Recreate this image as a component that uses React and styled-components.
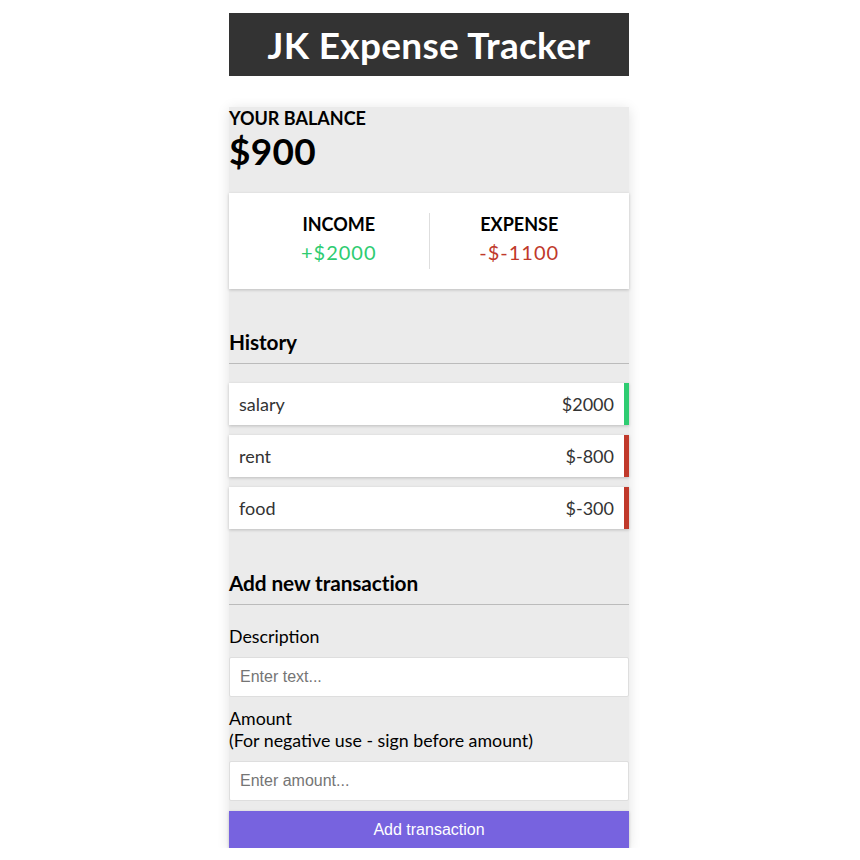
import React from 'react'
import styled, { createGlobalStyle } from 'styled-components'

const GlobalStyle = createGlobalStyle`
  * { box-sizing: border-box; }
  body {
    margin: 0;
    background: #fff;
    font-family: 'Lato', 'Open Sans', sans-serif;
    color: #000;
  }
`

const transactions = [
  { id: 1, text: 'salary', amount: 2000 },
  { id: 2, text: 'rent', amount: -800 },
  { id: 3, text: 'food', amount: -300 },
]

function App() {
  return (
    <>
      <GlobalStyle />
      <Page>
        <Header>JK Expense Tracker</Header>
        <Container>
          <BalanceTitle>Your Balance</BalanceTitle>
          <Balance>$900</Balance>

          <IncExp>
            <Half divider>
              <SmallTitle>Income</SmallTitle>
              <Money plus>+$2000</Money>
            </Half>
            <Half>
              <SmallTitle>Expense</SmallTitle>
              <Money>-$-1100</Money>
            </Half>
          </IncExp>

          <SectionTitle>History</SectionTitle>
          <List>
            {transactions.map(t => (
              <Item key={t.id} minus={t.amount < 0}>
                {t.text}
                <span>${t.amount}</span>
              </Item>
            ))}
          </List>

          <SectionTitle top={41}>Add new transaction</SectionTitle>
          <form onSubmit={e => e.preventDefault()}>
            <FormControl>
              <Label htmlFor="text">Description</Label>
              <Input type="text" id="text" placeholder="Enter text..." />
            </FormControl>
            <FormControl>
              <Label htmlFor="amount">
                Amount <br />
                (For negative use - sign before amount)
              </Label>
              <Input type="number" id="amount" placeholder="Enter amount..." />
            </FormControl>
            <Button>Add transaction</Button>
          </form>
        </Container>
      </Page>
    </>
  )
}

export default App

const Page = styled.div`
  display: flex;
  flex-direction: column;
  align-items: center;
  padding: 13px 2px 0 0;
`

const Header = styled.h2`
  width: 400px;
  height: 63px;
  margin: 0;
  background: #333;
  color: #fff;
  font-size: 37px;
  font-weight: 700;
  letter-spacing: 0.3px;
  display: flex;
  align-items: center;
  justify-content: center;
`

const Container = styled.div`
  width: 400px;
  margin-top: 31px;
  background: #ebebeb;
  box-shadow: 0 2px 12px rgba(0, 0, 0, 0.12);
`

const BalanceTitle = styled.h4`
  margin: 0;
  font-size: 18px;
  line-height: 22px;
  font-weight: 700;
  text-transform: uppercase;
`

const Balance = styled.h1`
  margin: 0;
  font-size: 37px;
  line-height: 43px;
  font-weight: 700;
  letter-spacing: 0.3px;
`

const IncExp = styled.div`
  background: #fff;
  box-shadow: 0 1px 3px rgba(0, 0, 0, 0.2);
  padding: 20px;
  margin-top: 21px;
  display: flex;
  justify-content: space-between;
`

const Half = styled.div`
  flex: 1;
  text-align: center;
  ${p => p.divider && 'border-right: 1px solid #dedede;'}
`

const SmallTitle = styled.h4`
  margin: 0;
  font-size: 18px;
  line-height: 22px;
  font-weight: 700;
  text-transform: uppercase;
`

const Money = styled.p`
  margin: 5px 0;
  font-size: 20px;
  line-height: 24px;
  letter-spacing: 1px;
  color: ${p => (p.plus ? '#2ecc71' : '#c0392b')};
`

const SectionTitle = styled.h3`
  margin: ${p => p.top || 40}px 0 0;
  padding-bottom: 8px;
  border-bottom: 1px solid #bbb;
  font-size: 20.8px;
  line-height: 26px;
  font-weight: 700;
  letter-spacing: -0.1px;
`

const List = styled.ul`
  list-style: none;
  margin: 19px 0 0;
  padding: 0;
  display: flex;
  flex-direction: column;
  gap: 10px;
`

const Item = styled.li`
  height: 42px;
  background: #fff;
  box-shadow: 0 1px 3px rgba(0, 0, 0, 0.2);
  color: #333;
  font-size: 18px;
  display: flex;
  align-items: center;
  justify-content: space-between;
  padding: 0 10px;
  border-right: 5px solid ${p => (p.minus ? '#c0392b' : '#2ecc71')};
`

const FormControl = styled.div`
  margin-top: 10px;
  &:first-child {
    margin-top: 20px;
  }
`

const Label = styled.label`
  display: block;
  margin-bottom: 10px;
  font-size: 17.8px;
  line-height: 22px;
`

const Input = styled.input`
  display: block;
  width: 100%;
  height: 40px;
  border: 1px solid #dedede;
  border-radius: 2px;
  padding: 10px;
  font-family: 'Liberation Sans', Arial, sans-serif;
  font-size: 16px;
  background: #fff;
  &::placeholder {
    color: #757575;
  }
`

const Button = styled.button`
  display: block;
  width: 100%;
  height: 37px;
  margin-top: 10px;
  border: 0;
  background: #7763df;
  color: #fff;
  font-family: 'Liberation Sans', Arial, sans-serif;
  font-size: 16px;
  box-shadow: 0 1px 3px rgba(0, 0, 0, 0.2);
  cursor: pointer;
`
